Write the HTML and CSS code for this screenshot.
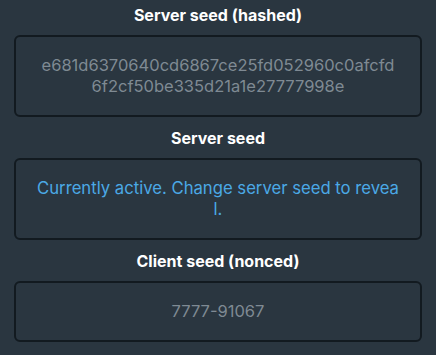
FILE: index.html
```html
<!DOCTYPE html>
<html lang="en">
<head>
  <meta charset="UTF-8">
  <meta name="viewport" content="width=device-width, initial-scale=1.0">
  <title>Seeds</title>
  <link rel="stylesheet" href="styles.css">
</head>
<body>
  <div class="seeds">
    <div class="field">
      <div class="label">Server seed (hashed)</div>
      <div class="box">e681d6370640cd6867ce25fd052960c0afcfd6f2cf50be335d21a1e27777998e</div>
    </div>

    <div class="field">
      <div class="label">Server seed</div>
      <div class="box active">Currently active. Change server seed to reveal.</div>
    </div>

    <div class="field">
      <div class="label">Client seed (nonced)</div>
      <div class="box">7777-91067</div>
    </div>
  </div>
</body>
</html>
```

FILE: styles.css
```css
html, body { margin: 0; background: #2a3640; }
body { font-family: Inter, "Open Sans", sans-serif; color: #fff; }
.seeds {
  padding: 5px 14px 0 14px;
}
.field { margin-bottom: 11px; }
.label {
  text-align: center;
  font-weight: bold;
  font-size: 16px;
  line-height: 20px;
  margin-bottom: 10px;
}
.box {
  border: 2px solid #121a20;
  border-radius: 6px;
  padding: 18px 21px;
  font-size: 16.5px;
  line-height: 21px;
  text-align: center;
  color: #7f8a93;
  word-break: break-all;
}
.box.active { color: #4ba9e6; font-size: 16.68px; }
```
